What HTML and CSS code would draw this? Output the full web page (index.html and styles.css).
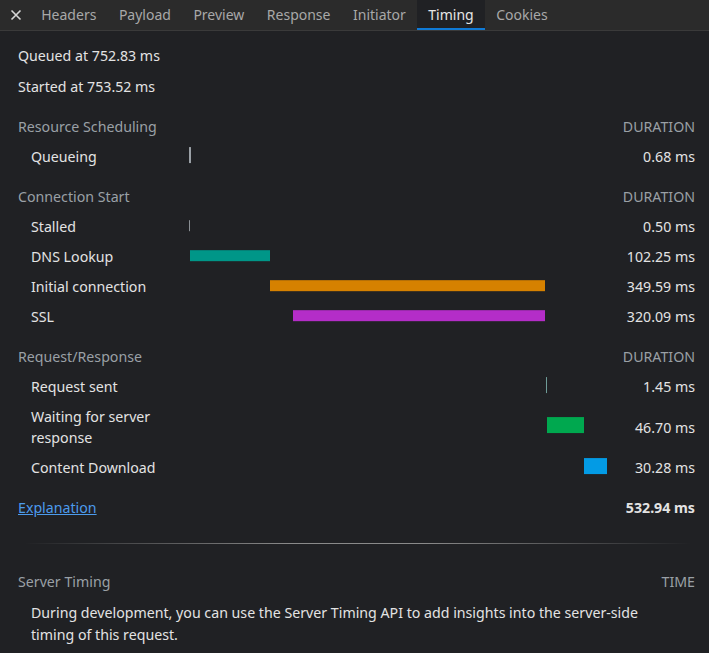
FILE: index.html
```html
<!DOCTYPE html>
<html lang="en">
<head>
<meta charset="utf-8">
<title>Timing</title>
<link rel="stylesheet" href="styles.css">
</head>
<body>
<div class="tabs">
  <div class="close" aria-label="Close">
    <svg width="12" height="12" viewBox="0 0 12 12"><path d="M1.5 1.5 L10.5 10.5 M10.5 1.5 L1.5 10.5" stroke="#d6d6d6" stroke-width="1.6" fill="none"/></svg>
  </div>
  <div class="tab">Headers</div>
  <div class="tab">Payload</div>
  <div class="tab">Preview</div>
  <div class="tab">Response</div>
  <div class="tab">Initiator</div>
  <div class="tab active">Timing</div>
  <div class="tab">Cookies</div>
</div>

<div class="timing">
  <div class="row first"><span class="span-all">Queued at 752.83 ms</span></div>
  <div class="row"><span class="span-all">Started at 753.52 ms</span></div>

  <div class="row header"><span class="label">Resource Scheduling</span><span class="cell"></span><span class="dur">DURATION</span></div>
  <div class="row item"><span class="label">Queueing</span><span class="cell"><span class="bar tall queue" style="left:-1px;width:2px"></span></span><span class="dur">0.68 ms</span></div>

  <div class="row header"><span class="label">Connection Start</span><span class="cell"></span><span class="dur">DURATION</span></div>
  <div class="row item"><span class="label">Stalled</span><span class="cell"><span class="bar stalled" style="left:-1px;width:1px"></span></span><span class="dur">0.50 ms</span></div>
  <div class="row item"><span class="label">DNS Lookup</span><span class="cell"><span class="bar dns" style="left:0px;width:80px"></span></span><span class="dur">102.25 ms</span></div>
  <div class="row item"><span class="label">Initial connection</span><span class="cell"><span class="bar conn" style="left:80px;width:275px"></span></span><span class="dur">349.59 ms</span></div>
  <div class="row item"><span class="label">SSL</span><span class="cell"><span class="bar ssl" style="left:103px;width:252px"></span></span><span class="dur">320.09 ms</span></div>

  <div class="row header"><span class="label">Request/Response</span><span class="cell"></span><span class="dur">DURATION</span></div>
  <div class="row item"><span class="label">Request sent</span><span class="cell"><span class="bar tall sent" style="left:356px;width:1px"></span></span><span class="dur">1.45 ms</span></div>
  <div class="row item"><span class="label">Waiting for server response</span><span class="cell"><span class="bar tall wait" style="left:357px;width:37px"></span></span><span class="dur">46.70 ms</span></div>
  <div class="row item"><span class="label">Content Download</span><span class="cell"><span class="bar tall download" style="left:394px;width:23px"></span></span><span class="dur">30.28 ms</span></div>

  <div class="row total"><a class="link" href="#">Explanation</a><span class="cell"></span><span class="dur bold">532.94 ms</span></div>

  <div class="divider"></div>

  <div class="row header server"><span class="label">Server Timing</span><span class="cell"></span><span class="dur">TIME</span></div>
  <p class="note">During development, you can use the Server Timing API to add insights into the server-side timing of this request.</p>
</div>
</body>
</html>
```
FILE: styles.css
```css
* { box-sizing: border-box; }
html, body {
  margin: 0;
  padding: 0;
  background: #202124;
  height: 100%;
}
body {
  font-family: "Noto Sans", "Open Sans", sans-serif;
  font-size: 14.2px;
  color: #e3e3e3;
  overflow: hidden;
}
.tabs {
  display: flex;
  align-items: stretch;
  height: 31px;
  background: #2b2b2b;
  border-bottom: 1px solid #3a3a3a;
}
.close {
  width: 30px;
  display: flex;
  align-items: center;
  justify-content: center;
  padding-left: 1px;
}
.tab {
  padding: 0 11.25px;
  display: flex;
  align-items: center;
  color: #a8a8a8;
  white-space: nowrap;
  border-bottom: 2px solid transparent;
  padding-top: 1px;
  font-size: 14px;
}
.tab.active {
  background: #202124;
  color: #e6e6e6;
  border-bottom-color: #0f7ad6;
}
.timing {
  padding: 9px 14px 0 18px;
}
.row {
  display: grid;
  grid-template-columns: 172px 1fr 88px;
  align-items: center;
  min-height: 30px;
  line-height: 21px;
}
.row.first { min-height: 31px; }
.span-all { grid-column: 1 / 4; }
.header { margin-top: 10px; color: #9aa0a6; }
.item .label { padding-left: 13px; padding-right: 10px; }
.item { padding: 5px 0 4px; }
.cell {
  position: relative;
  align-self: stretch;
}
.dur { text-align: right; white-space: nowrap; }
.bar {
  position: absolute;
  top: 50%;
  height: 11px;
  transform: translateY(-62%);
}
.bar.tall { height: 16px; }
.queue { background: #9aa0a6; }
.stalled { background: #8a8f94; }
.dns { background: #009688; }
.conn { background: #d68100; }
.ssl { background: #b42dc8; }
.sent { background: #6f9c98; }
.wait { background: #00a84f; height: 17px; }
.download { background: #039be5; }
.total { margin-top: 10px; }
.link { color: #4c9bec; text-decoration: underline; }
.bold { font-weight: 700; }
.divider {
  height: 1px;
  margin: 21px 4px 0 6px;
  background: linear-gradient(to right, rgba(140,140,140,0), #8a8a8a 40%, #8a8a8a 60%, rgba(140,140,140,0));
}
.server { margin-top: 22px; }
.note {
  margin: 0;
  padding: 6px 40px 0 13px;
  line-height: 22px;
}
```
